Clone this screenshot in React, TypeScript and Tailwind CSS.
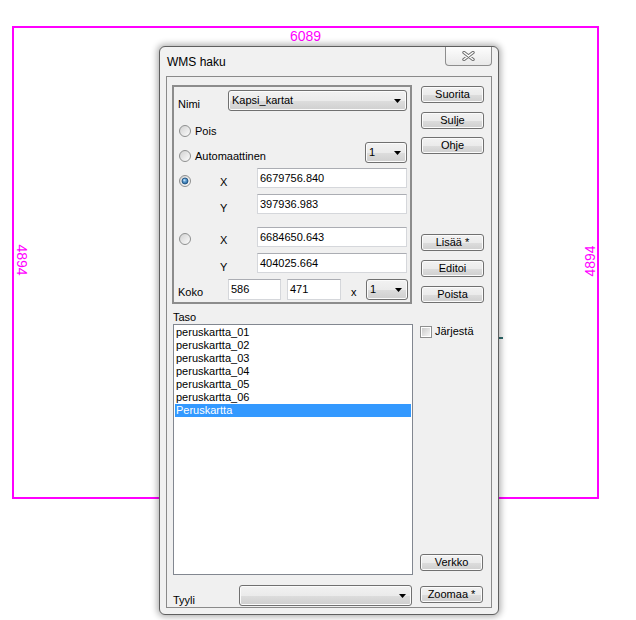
import React from "react"

const btn =
  "flex h-[17px] w-[63px] shrink-0 items-center justify-center rounded-[3px] border border-[#707070] bg-[linear-gradient(#f2f2f2_0%,#ebebeb_50%,#dddddd_51%,#cfcfcf_100%)] shadow-[inset_0_0_0_1px_#fbfbfb] text-[11px] leading-[13px]"

function Btn({ children, className = "" }: { children: React.ReactNode; className?: string }) {
  return <div className={`${btn} ${className}`}>{children}</div>
}

function Arrow() {
  return (
    <svg width="7" height="4" viewBox="0 0 7 4" className="shrink-0">
      <polygon points="0,0 7,0 3.5,4" fill="#000" />
    </svg>
  )
}

function Combo({ value = "", className = "" }: { value?: string; className?: string }) {
  return (
    <div
      className={`flex h-[21px] shrink-0 items-center rounded-[3px] border border-[#707070] bg-[linear-gradient(#f2f2f2_0%,#ebebeb_50%,#dddddd_51%,#cfcfcf_100%)] pl-[3px] pr-[5px] text-[11px] leading-[13px] shadow-[inset_0_0_0_1px_#fbfbfb] ${className}`}
    >
      <span className="flex-1">{value}</span>
      <Arrow />
    </div>
  )
}

function Field({ value, className = "" }: { value: string; className?: string }) {
  return (
    <div
      className={`flex h-[20px] shrink-0 items-center border border-[#d5d7db] border-t-[#abadb3] bg-white pl-[2px] text-[11px] leading-[13px] ${className}`}
    >
      {value}
    </div>
  )
}

function Radio({ checked = false }: { checked?: boolean }) {
  return (
    <svg width="12" height="12" viewBox="0 0 12 12" className="shrink-0">
      <circle cx="6" cy="6" r="5.5" fill="url(#radioFill)" stroke="#8e8f8f" />
      {checked && (
        <>
          <circle cx="6" cy="6" r="3" fill="url(#radioDot)" stroke="#1b4f7d" strokeWidth="0.8" />
          <circle cx="5.3" cy="5.2" r="1" fill="#b9dcf7" />
        </>
      )}
    </svg>
  )
}

function Check() {
  return (
    <svg width="12" height="12" viewBox="0 0 12 12" className="shrink-0">
      <rect x="0.5" y="0.5" width="11" height="11" fill="#fff" stroke="#8e8f8f" />
      <rect x="2" y="2" width="8" height="8" fill="url(#checkFill)" />
    </svg>
  )
}

const layers = [
  "peruskartta_01",
  "peruskartta_02",
  "peruskartta_03",
  "peruskartta_04",
  "peruskartta_05",
  "peruskartta_06",
  "Peruskartta",
]

export default function App() {
  return (
    <div className="relative h-[620px] w-[636px] overflow-hidden bg-white font-['Liberation_Sans',Arial,sans-serif] text-black">
      <svg width="0" height="0" className="absolute">
        <defs>
          <linearGradient id="radioFill" x1="0" y1="0" x2="1" y2="1">
            <stop offset="0" stopColor="#cfcfcf" />
            <stop offset="1" stopColor="#ffffff" />
          </linearGradient>
          <radialGradient id="radioDot" cx="0.45" cy="0.4" r="0.6">
            <stop offset="0" stopColor="#8cc6f2" />
            <stop offset="1" stopColor="#1f5f98" />
          </radialGradient>
          <linearGradient id="checkFill" x1="0" y1="0" x2="1" y2="1">
            <stop offset="0" stopColor="#cbcbcb" />
            <stop offset="1" stopColor="#f6f6f6" />
          </linearGradient>
        </defs>
      </svg>

      {/* map frame */}
      <div className="absolute left-[12px] top-[26px] h-[473px] w-[587px] border-2 border-[#ff00ff] text-[14px] text-[#ff00ff]">
        <div className="text-center leading-4">6089</div>
        <div className="absolute left-[-12px] top-[224px] h-[16px] w-[40px] rotate-90 text-center leading-4">4894</div>
        <div className="absolute left-[556px] top-[225px] h-[16px] w-[40px] -rotate-90 text-center leading-4">4894</div>
      </div>
      <div className="absolute left-[499px] top-[337px] h-[2px] w-[4px] bg-[#2f6b6e]" />

      {/* dialog */}
      <div className="absolute left-[159px] top-[46px] flex h-[569px] w-[340px] flex-col rounded-[6px] border border-[#5f5f5f] bg-[#f1f1f1] shadow-[0_0_6px_2px_rgba(0,0,0,0.3)]">
        <div className="flex h-[29px] shrink-0 items-start justify-between pl-[7px] pr-[6px]">
          <span className="pt-[8px] text-[12px] leading-[14px]">WMS haku</span>
          <div className="flex h-[19px] w-[47px] items-center justify-center rounded-b-[4px] border border-t-0 border-[#8d8d8d] bg-[linear-gradient(#fdfdfd,#e9e9e9)]">
            <svg width="13" height="10" viewBox="0 0 13 10">
              <path d="M2 1.5 L11 8.5 M11 1.5 L2 8.5" stroke="#6f6f6f" strokeWidth="3.4" strokeLinecap="round" />
              <path d="M2 1.5 L11 8.5 M11 1.5 L2 8.5" stroke="#ffffff" strokeWidth="1.4" strokeLinecap="round" />
            </svg>
          </div>
        </div>

        {/* client area */}
        <div className="mx-[6px] flex h-[532px] shrink-0 flex-col border border-[#8a8a8a] bg-[#f0f0f0] pl-[5px] pt-[8px] text-[11px] leading-[13px]">
          {/* top section */}
          <div className="flex">
            <div className="flex h-[219px] w-[240px] shrink-0 flex-col border-2 border-[#8c8c8c]">
              <div className="mt-[3px] flex h-[21px] items-center pl-[4px]">
                <span className="w-[50px] shrink-0 pt-[8px]">Nimi</span>
                <Combo value="Kapsi_kartat" className="w-[179px]" />
              </div>
              <div className="mt-[10px] flex h-[20px] items-center gap-[4px] pl-[5px]">
                <Radio />
                <span>Pois</span>
              </div>
              <div className="mt-[1px] flex h-[21px] items-center pl-[5px] pr-[3px]">
                <div className="flex items-center gap-[4px] pt-[7px]">
                  <Radio />
                  <span>Automaattinen</span>
                </div>
                <Combo value="1" className="ml-auto w-[42px]" />
              </div>
              <div className="mt-[5px] flex h-[20px] items-center pl-[4px]">
                <div className="flex w-[42px] shrink-0 pl-[1px] pt-[5px]">
                  <Radio checked />
                </div>
                <span className="w-[37px] shrink-0 pt-[8px]">X</span>
                <Field value="6679756.840" className="w-[150px]" />
              </div>
              <div className="mt-[6px] flex h-[20px] items-center pl-[4px]">
                <span className="w-[42px] shrink-0" />
                <span className="w-[37px] shrink-0 pt-[8px]">Y</span>
                <Field value="397936.983" className="w-[150px]" />
              </div>
              <div className="mt-[13px] flex h-[20px] items-center pl-[4px]">
                <div className="flex w-[42px] shrink-0 pl-[1px] pt-[4px]">
                  <Radio />
                </div>
                <span className="w-[37px] shrink-0 pt-[7px]">X</span>
                <Field value="6684650.643" className="w-[150px]" />
              </div>
              <div className="mt-[6px] flex h-[20px] items-center pl-[4px]">
                <span className="w-[42px] shrink-0" />
                <span className="w-[37px] shrink-0 pt-[8px]">Y</span>
                <Field value="404025.664" className="w-[150px]" />
              </div>
              <div className="mt-[6px] flex h-[21px] items-center pl-[4px]">
                <span className="w-[50px] shrink-0 pt-[6px]">Koko</span>
                <Field value="586" className="h-[21px] w-[53px]" />
                <Field value="471" className="ml-[6px] h-[21px] w-[54px]" />
                <span className="w-[25px] shrink-0 pl-[10px] pt-[6px]">x</span>
                <Combo value="1" className="w-[42px]" />
              </div>
            </div>
            <div className="ml-[9px] mt-[1px] flex flex-col">
              <Btn>Suorita</Btn>
              <Btn className="mt-[9px]">Sulje</Btn>
              <Btn className="mt-[8px]">Ohje</Btn>
              <Btn className="mt-[80px]">Lisää *</Btn>
              <Btn className="mt-[9px]">Editoi</Btn>
              <Btn className="mt-[9px]">Poista</Btn>
            </div>
          </div>

          {/* layer list */}
          <div className="flex">
            <div className="ml-[1px] flex w-[240px] shrink-0 flex-col">
              <span className="mt-[7px]">Taso</span>
              <div className="flex h-[251px] flex-col border border-[#828790] bg-white px-[1px] pt-[1px]">
                {layers.map((l, i) => (
                  <div
                    key={l}
                    className={`h-[13px] pl-[1px] ${i === layers.length - 1 ? "bg-[#3399ff] text-white" : ""}`}
                  >
                    {l}
                  </div>
                ))}
              </div>
            </div>
            <div className="ml-[7px] flex flex-col">
              <div className="mt-[21px] flex items-center gap-[3px]">
                <Check />
                <span>Järjestä</span>
              </div>
              <Btn className="mb-[4px] mt-auto">Verkko</Btn>
            </div>
          </div>

          {/* style row */}
          <div className="mt-[9px] flex items-start">
            <div className="ml-[1px] flex w-[240px] shrink-0 items-center">
              <span className="w-[66px] shrink-0 pt-[10px]">Tyyli</span>
              <Combo className="w-[173px]" />
            </div>
            <Btn className="ml-[7px] mt-[2px]">Zoomaa *</Btn>
          </div>
        </div>
      </div>
    </div>
  )
}
